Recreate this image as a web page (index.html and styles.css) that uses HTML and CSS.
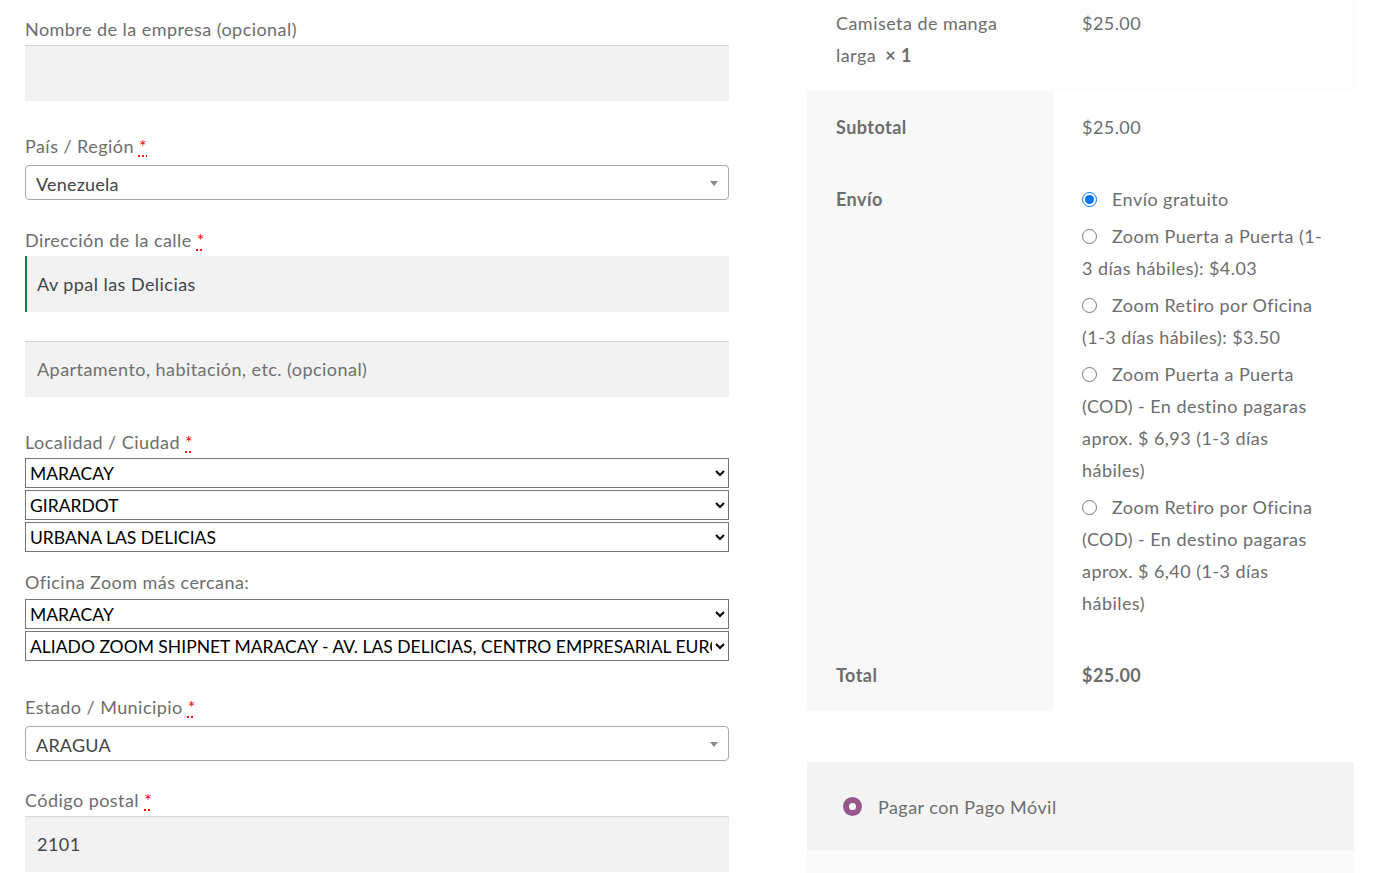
FILE: index.html
```html
<!DOCTYPE html>
<html lang="es">
<head>
<meta charset="utf-8">
<title>Finalizar compra</title>
<link rel="stylesheet" href="styles.css">
</head>
<body>
<div class="page">
  <form class="billing">
    <div class="field gap-31">
      <label class="lbl">Nombre de la empresa (opcional)</label>
      <input class="txt" type="text">
    </div>
    <div class="field gap-26">
      <label class="lbl">País / Región <abbr class="req" title="obligatorio">*</abbr></label>
      <div class="s2"><span class="s2-text">Venezuela</span><span class="s2-arrow"></span></div>
    </div>
    <div class="field gap-31">
      <label class="lbl">Dirección de la calle <abbr class="req" title="obligatorio">*</abbr></label>
      <input class="txt txt-valid" type="text" value="Av ppal las Delicias">
      <input class="txt txt-apt" type="text" placeholder="Apartamento, habitación, etc. (opcional)">
    </div>
    <div class="field gap-16">
      <label class="lbl">Localidad / Ciudad <abbr class="req" title="obligatorio">*</abbr></label>
      <select class="nsel"><option>MARACAY</option></select>
      <select class="nsel"><option>GIRARDOT</option></select>
      <select class="nsel"><option>URBANA LAS DELICIAS</option></select>
    </div>
    <div class="field field-office gap-32">
      <label class="lbl">Oficina Zoom más cercana:</label>
      <select class="nsel"><option>MARACAY</option></select>
      <select class="nsel"><option>ALIADO ZOOM SHIPNET MARACAY - AV. LAS DELICIAS, CENTRO EMPRESARIAL EUROBUILDING</option></select>
    </div>
    <div class="field gap-25">
      <label class="lbl">Estado / Municipio <abbr class="req" title="obligatorio">*</abbr></label>
      <div class="s2"><span class="s2-text">ARAGUA</span><span class="s2-arrow"></span></div>
    </div>
    <div class="field">
      <label class="lbl">Código postal <abbr class="req" title="obligatorio">*</abbr></label>
      <input class="txt" type="text" value="2101">
    </div>
  </form>

  <aside class="order">
    <table class="review">
      <tbody>
        <tr class="row-item">
          <td class="c-name"><span>Camiseta de manga</span> <span>larga</span> <strong class="qty">× 1</strong></td>
          <td class="c-val">$25.00</td>
        </tr>
      </tbody>
      <tfoot>
        <tr>
          <th class="c-name">Subtotal</th>
          <td class="c-val">$25.00</td>
        </tr>
        <tr>
          <th class="c-name">Envío</th>
          <td class="c-val">
            <ul class="ship">
              <li><input type="radio" name="ship" class="rad" checked><label>Envío gratuito</label></li>
              <li><input type="radio" name="ship" class="rad"><label>Zoom Puerta a Puerta (1-3 días hábiles): $4.03</label></li>
              <li><input type="radio" name="ship" class="rad"><label>Zoom Retiro por Oficina (1-3 días hábiles): $3.50</label></li>
              <li><input type="radio" name="ship" class="rad"><label>Zoom Puerta a Puerta (COD) - En destino pagaras aprox. $ 6,93 (1-3 días hábiles)</label></li>
              <li><input type="radio" name="ship" class="rad"><label>Zoom Retiro por Oficina (COD) - En destino pagaras aprox. $ 6,40 (1-3 días hábiles)</label></li>
            </ul>
          </td>
        </tr>
        <tr>
          <th class="c-name">Total</th>
          <td class="c-val"><strong>$25.00</strong></td>
        </tr>
      </tfoot>
    </table>

    <div class="payment">
      <div class="pay-method">
        <span class="pay-dot"></span>
        <span class="pay-label">Pagar con Pago Móvil</span>
      </div>
      <div class="pay-box"></div>
    </div>
  </aside>
</div>
</body>
</html>
```

FILE: styles.css
```css
html, body {
  margin: 0;
  padding: 0;
  background: #ffffff;
}

body {
  font-family: "Lato", "Liberation Sans", sans-serif;
  font-size: 18px;
  letter-spacing: 0.45px;
  color: #6d6d6d;
  overflow: hidden;
  height: 873px;
}

.page {
  display: flex;
  align-items: flex-start;
  gap: 78px;
  padding-left: 25px;
}

/* ---------- left form ---------- */
.billing {
  width: 704px;
  flex: none;
  display: flex;
  flex-direction: column;
  padding-top: 15px;
}

.field {
  display: flex;
  flex-direction: column;
}

.gap-32 { margin-bottom: 32px; }
.gap-31 { margin-bottom: 31px; }
.gap-26 { margin-bottom: 26px; }
.gap-25 { margin-bottom: 25px; }
.gap-16 { margin-bottom: 16px; }

.lbl {
  display: block;
  line-height: 29px;
  height: 29px;
  color: #6d6d6d;
  margin-bottom: 1px;
}

.field-office .lbl {
  margin-bottom: 2px;
}

.req {
  color: #ff0000;
  text-decoration: underline dotted #ff0000;
  text-underline-offset: 3px;
}

.txt {
  box-sizing: border-box;
  display: block;
  width: 100%;
  height: 56px;
  border: 0;
  margin: 0;
  padding: 0 12px;
  background: #f2f2f2;
  box-shadow: inset 0 1px 1px rgba(0, 0, 0, 0.125);
  font-family: inherit;
  font-size: 18px;
  letter-spacing: 0.45px;
  color: #43454b;
  outline: none;
}

.txt::placeholder {
  color: #6f6f6f;
}

.txt-valid {
  box-shadow: inset 2px 0 0 #0f834d;
}

.txt-apt {
  margin-top: 29px;
}

.s2 {
  box-sizing: border-box;
  height: 35px;
  margin-top: 3px;
  border: 1px solid #aaaaaa;
  border-radius: 4px;
  background: #ffffff;
  display: flex;
  align-items: center;
  justify-content: space-between;
  padding: 2px 10px 0 10px;
}

.s2-text {
  color: #444444;
  font-size: 18px;
  letter-spacing: 0.2px;
}

.s2-arrow {
  width: 0;
  height: 0;
  border-style: solid;
  border-width: 5px 4px 0 4px;
  border-color: #888888 transparent transparent transparent;
}

.nsel {
  display: block;
  width: 704px;
  height: 30px;
  margin: 0 0 2px 0;
  font-family: inherit;
  font-size: 17.5px;
  letter-spacing: 0;
  color: #000000;
  background-color: #ffffff;
}

.nsel:last-child {
  margin-bottom: 0;
}

/* ---------- right order review ---------- */
.order {
  width: 547px;
  flex: none;
}

.review {
  width: 547px;
  border-collapse: collapse;
  border-spacing: 0;
  table-layout: fixed;
}

.review th,
.review td {
  text-align: left;
  vertical-align: top;
  padding: 20px 29px;
  line-height: 32px;
  font-size: 18px;
  color: #6d6d6d;
}

.review .c-name {
  width: 188px;
}

.row-item td {
  background: #fdfdfd;
  padding-top: 7px;
}

.qty {
  margin-left: 4px;
}

.review th {
  background: #f8f8f8;
  font-weight: 700;
}

.review tfoot td {
  background: #ffffff;
}

.review strong {
  font-weight: 700;
}

.ship {
  list-style: none;
  margin: 0;
  padding: 0;
}

.ship li {
  margin: 0 0 5px 0;
}

.ship li:last-child {
  margin-bottom: 0;
}

.rad {
  width: 15px;
  height: 15px;
  margin: 0 15px 0 0;
  vertical-align: -1px;
}

.payment {
  margin-top: 51px;
}

.pay-method {
  height: 89px;
  background: #f4f4f4;
  display: flex;
  align-items: center;
  padding-left: 36px;
  gap: 16px;
}

.pay-dot {
  width: 19px;
  height: 19px;
  border-radius: 50%;
  background: #96588a;
  position: relative;
  flex: none;
}

.pay-dot::after {
  content: "";
  position: absolute;
  left: 6px;
  top: 6px;
  width: 7px;
  height: 7px;
  border-radius: 50%;
  background: #ffffff;
}

.pay-label {
  color: #6d6d6d;
}

.pay-box {
  height: 60px;
  background: #fafafa;
}
```
